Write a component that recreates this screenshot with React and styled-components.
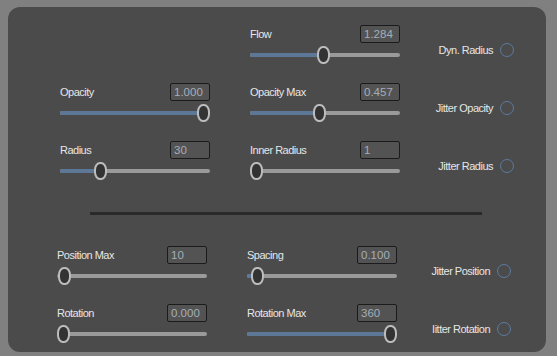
import React from "react";
import styled, { createGlobalStyle } from "styled-components";

const GlobalStyle = createGlobalStyle`
  html, body {
    margin: 0;
    padding: 0;
    background: #808080;
    font-family: "Liberation Sans", Arial, sans-serif;
  }
`;

const Page = styled.div`
  width: 557px;
  height: 356px;
  padding: 7px 11px 4px 8px;
  box-sizing: border-box;
`;

const Panel = styled.div`
  height: 345px;
  background: #4b4b4b;
  border-radius: 12px;
  box-sizing: border-box;
  padding-top: 18px;
`;

const Section = styled.div`
  display: grid;
  grid-template-columns: 150px 150px minmax(0, 1fr);
  column-gap: 40px;
  row-gap: 19px;
  padding: 0 ${props => props.right}px 0 ${props => props.left}px;
`;

const Divider = styled.div`
  height: 3px;
  background: #2a2a2a;
  margin: 32px 64px 31px 82px;
`;

const Field = styled.div`
  display: flex;
  flex-direction: column;
  gap: 3px;
`;

const Header = styled.div`
  height: 18px;
  display: flex;
  align-items: center;
  justify-content: space-between;
`;

const Label = styled.span`
  color: #e6e6e6;
  font-size: 11px;
  letter-spacing: -0.5px;
  white-space: nowrap;
`;

const NumberBox = styled.div`
  width: 40px;
  height: 18px;
  box-sizing: border-box;
  border: 1px solid #1b1b1b;
  border-radius: 2px;
  background: #535353;
  color: #a5aeb8;
  font-size: 11.5px;
  line-height: 16px;
  padding-left: 3px;
`;

const Track = styled.div`
  position: relative;
  height: 18px;
  &::before {
    content: "";
    position: absolute;
    left: 0;
    right: 0;
    top: 7px;
    height: 4px;
    border-radius: 2px;
    background: #9a9a9a;
  }
`;

const Fill = styled.div`
  position: absolute;
  left: 0;
  top: 7px;
  height: 4px;
  border-radius: 2px;
  background: #5d7796;
`;

const Thumb = styled.div`
  position: absolute;
  top: 0;
  width: 13px;
  height: 18px;
  box-sizing: border-box;
  border: 2px solid #bdbdbd;
  border-radius: 6px / 8px;
  background: #333333;
`;

const Check = styled.div`
  display: flex;
  align-items: center;
  justify-content: flex-end;
  gap: 7px;
  padding-top: 18px;
  height: 14px;
`;

const Circle = styled.span`
  width: 14px;
  height: 14px;
  box-sizing: border-box;
  border: 1.5px solid #5b7ba2;
  border-radius: 50%;
  flex: none;
`;

const Slider = ({ frac }) => {
  const pos = 6.5 + frac * 137;
  return (
    <Track>
      <Fill style={{ width: `${pos}px` }} />
      <Thumb style={{ left: `${pos - 6.5}px` }} />
    </Track>
  );
};

const Control = ({ label, value, frac }) => (
  <Field>
    <Header>
      <Label>{label}</Label>
      <NumberBox>{value}</NumberBox>
    </Header>
    <Slider frac={frac} />
  </Field>
);

const Toggle = ({ label }) => (
  <Check>
    <Label>{label}</Label>
    <Circle />
  </Check>
);

const App = () => (
  <>
    <GlobalStyle />
    <Page>
      <Panel>
        <Section left={52} right={32}>
          <div />
          <Control label="Flow" value="1.284" frac={0.49} />
          <Toggle label="Dyn. Radius" />

          <Control label="Opacity" value="1.000" frac={1} />
          <Control label="Opacity Max" value="0.457" frac={0.457} />
          <Toggle label="Jitter Opacity" />

          <Control label="Radius" value="30" frac={0.248} />
          <Control label="Inner Radius" value="1" frac={0} />
          <Toggle label="Jitter Radius" />
        </Section>
        <Divider />
        <Section left={49} right={35}>
          <Control label="Position Max" value="10" frac={0.007} />
          <Control label="Spacing" value="0.100" frac={0.026} />
          <Toggle label="Jitter Position" />

          <Control label="Rotation" value="0.000" frac={0} />
          <Control label="Rotation Max" value="360" frac={1} />
          <Toggle label="Iitter Rotation" />
        </Section>
      </Panel>
    </Page>
  </>
);

export default App;
